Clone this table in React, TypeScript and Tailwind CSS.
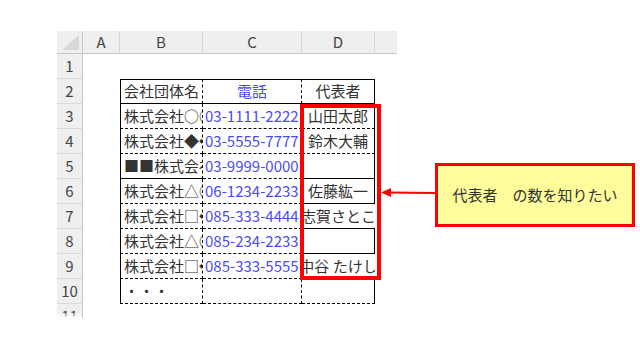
const font = "font-['Noto_Sans_CJK_JP','Noto_Sans',sans-serif]"

type Edge = "s" | "d" | "n"

const bottom: Record<Edge, string> = {
    s: "[border-bottom:1px_solid_#000]",
    d: "[border-bottom:1px_dashed_#000]",
    n: "",
}

const right: Record<Edge, string> = {
    s: "[border-right:1px_solid_#000]",
    d: "[border-right:1px_dashed_#000]",
    n: "",
}

type Row = {
    n: number
    b: string
    c: string
    d: string
    bB: Edge
    cB: Edge
    dB: Edge
    cR: Edge
    dR: Edge
    head?: boolean
}

const rows: Row[] = [
    { n: 2, b: "会社団体名", c: "電話", d: "代表者", bB: "s", cB: "s", dB: "s", cR: "d", dR: "s", head: true },
    { n: 3, b: "株式会社○○", c: "03-1111-2222", d: "山田太郎", bB: "d", cB: "d", dB: "d", cR: "d", dR: "s" },
    { n: 4, b: "株式会社◆◆", c: "03-5555-7777", d: "鈴木大輔", bB: "d", cB: "d", dB: "d", cR: "d", dR: "s" },
    { n: 5, b: "■■株式会社", c: "03-9999-0000", d: "", bB: "s", cB: "d", dB: "s", cR: "d", dR: "s" },
    { n: 6, b: "株式会社△○", c: "06-1234-2233", d: "佐藤紘一", bB: "d", cB: "d", dB: "s", cR: "d", dR: "s" },
    { n: 7, b: "株式会社□◆", c: "085-333-4444", d: "志賀さとこ", bB: "d", cB: "d", dB: "s", cR: "n", dR: "n" },
    { n: 8, b: "株式会社△○", c: "085-234-2233", d: "", bB: "d", cB: "d", dB: "s", cR: "d", dR: "s" },
    { n: 9, b: "株式会社□◆", c: "085-333-5555", d: "中谷 たけし", bB: "d", cB: "d", dB: "d", cR: "n", dR: "n" },
    { n: 10, b: "・・・", c: "", d: "", bB: "d", cB: "d", dB: "d", cR: "d", dR: "s" },
]

function RowHead({ n }: { n: number }) {
    return (
        <div className="w-[26px] h-[25px] shrink-0 bg-[#efefef] border-r border-r-[#c8c8c8] border-b border-b-[#dadada] flex items-center justify-center text-[15px] text-[#444]">
            {n}
        </div>
    )
}

function ColHead({ label, w }: { label: string; w: string }) {
    return (
        <div className={`${w} h-full shrink-0 bg-[#efefef] border-r border-r-[#d6d6d6] border-b border-b-[#c8c8c8] flex items-center justify-center text-[15px] text-[#444]`}>
            {label}
        </div>
    )
}

export default function App() {
    return (
        <div className={`relative w-[640px] h-[356px] bg-white overflow-hidden ${font}`}>
            <div className="pt-[31px] pl-[57px]">
                {/* column headers */}
                <div className="flex h-[23px]">
                    <div className="relative w-[26px] h-full shrink-0 bg-[#efefef] border-r border-r-[#c8c8c8] border-b border-b-[#c8c8c8]">
                        <svg className="absolute inset-0" width="25" height="22" viewBox="0 0 25 22">
                            <polygon points="22,4 22,19 5,19" fill="#d8d8d8" />
                        </svg>
                    </div>
                    <ColHead label="A" w="w-[37px]" />
                    <ColHead label="B" w="w-[83px]" />
                    <ColHead label="C" w="w-[99px]" />
                    <ColHead label="D" w="w-[73px]" />
                    <div className="w-[22px] h-full shrink-0 bg-[#efefef] border-b border-b-[#c8c8c8]" />
                </div>

                {/* row 1 */}
                <div className="flex h-[25px]">
                    <RowHead n={1} />
                </div>

                {rows.map((r) => (
                    <div key={r.n} className="flex h-[25px] text-[15px]">
                        <RowHead n={r.n} />
                        <div className="w-[37px] shrink-0" />
                        <div
                            className={`w-[83px] shrink-0 flex items-center pl-[3px] overflow-hidden whitespace-nowrap text-[#333] [border-left:1px_solid_#000] [border-right:1px_dashed_#000] ${bottom[r.bB]} ${r.head ? "[border-top:1px_solid_#000]" : ""}`}
                        >
                            {r.b}
                        </div>
                        <div
                            className={`w-[99px] shrink-0 flex items-center overflow-hidden whitespace-nowrap text-[#4b4bf5] ${right[r.cR]} ${bottom[r.cB]} ${r.head ? "[border-top:1px_solid_#000] justify-center" : "pl-[2px]"}`}
                        >
                            {r.c}
                        </div>
                        <div
                            className={`w-[73px] shrink-0 flex items-center justify-center overflow-hidden whitespace-nowrap text-[#333] ${right[r.dR]} ${bottom[r.dB]} ${r.head ? "[border-top:1px_solid_#000]" : ""}`}
                        >
                            <span className="shrink-0">{r.d}</span>
                        </div>
                    </div>
                ))}

                {/* row 11, cut off */}
                <div className="flex h-[14px] overflow-hidden">
                    <div className="relative w-[26px] h-[25px] shrink-0 bg-[#efefef] border-r border-r-[#c8c8c8] flex items-center justify-center text-[15px] text-[#444]">
                        11
                        <div className="absolute inset-x-0 top-[8px] h-[6px] bg-gradient-to-b from-transparent to-white" />
                    </div>
                </div>
            </div>

            {/* red highlight around 代表者 */}
            <div className="absolute left-[300px] top-[104px] w-[81px] h-[176px] border-4 border-[#ff0000]" />

            {/* arrow */}
            <svg className="absolute left-[378px] top-[183px]" width="60" height="20" viewBox="0 0 60 20">
                <line x1="57" y1="10" x2="10" y2="9.5" stroke="#ff0000" strokeWidth="2" />
                <polygon points="3,9.5 13,5 13,14" fill="#ff0000" />
            </svg>

            {/* callout */}
            <div className="absolute left-[435px] top-[163px] w-[200px] h-[64px] border-[3px] border-[#ff0000] bg-[#fffc9c] flex items-center justify-center text-[15px] text-[#333]">
                代表者　の数を知りたい
            </div>
        </div>
    )
}
